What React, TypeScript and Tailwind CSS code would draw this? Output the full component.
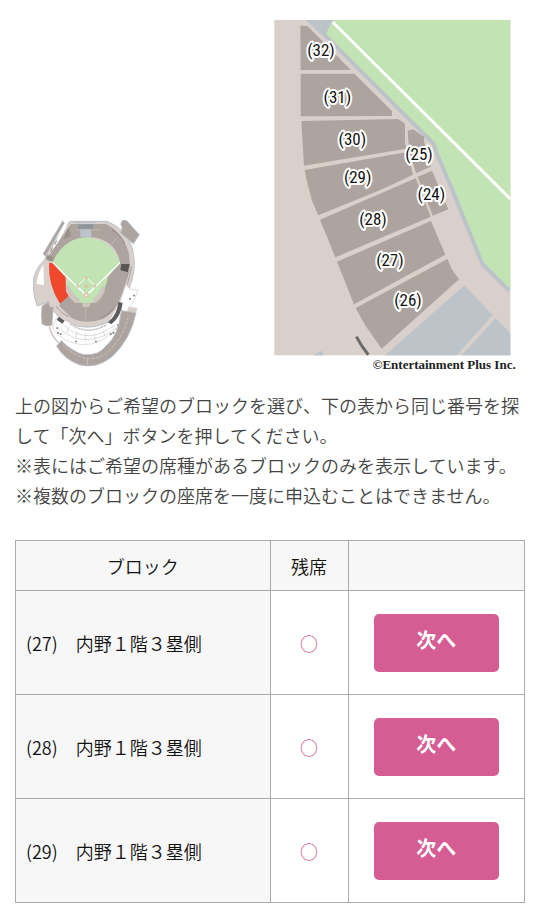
import { MouseEvent, useState } from 'react'

const BLOCKS = [
  { id: 32, points: '106,47 128,49 258,180 107,180', x: 168, y: 121 },
  { id: 31, points: '107,191 268,191 381,303 381,318 107,319', x: 217, y: 261 },
  { id: 30, points: '109,333 400,327 420,342 420,395 424,416 117,467', x: 262, y: 388 },
  { id: 29, points: '119,480 427,426 444,494 355,536 160,616 140,570 125,510', x: 278, y: 502 },
  { id: 28, points: '165,629 452,505 460,525 497,620 211,742', x: 324, y: 629 },
  { id: 27, points: '216,755 498,633 541,734 267,883', x: 375, y: 751 },
  { id: 26, points: '272,894 547,747 560,777 582,808 350,1016 300,945', x: 429, y: 871 },
  { id: 25, points: '428,362 445,358 477,380 478,398 497,470 453,490 432,420', x: 462, y: 433 },
  { id: 24, points: '458,500 501,482 550,598 503,617', x: 499, y: 552 },
]

const SEATS = [
  { id: 27, name: '内野１階３塁側', status: '○' },
  { id: 28, name: '内野１階３塁側', status: '○' },
  { id: 29, name: '内野１階３塁側', status: '○' },
]

function StadiumMap() {
  return (
    <svg className="h-[152px] w-[110px] shrink-0" viewBox="30 30 330 456" role="img" aria-label="球場全体図">
      {/* outer walkway */}
      <path
        d="M150 34 L262 34 Q318 58 336 112 Q350 160 336 210 L318 262 Q300 318 256 340 Q205 362 150 342 Q104 322 86 275 L52 288 Q36 250 42 200 Q54 165 72 152 L92 108 Z"
        fill="#d9d0cb"
        stroke="#b9c2c8"
        strokeWidth="3"
      />
      <path d="M70 165 L72 225 L50 222 Q52 190 70 165 Z" fill="#fff" />
      <path d="M142 40 L150 62 L104 132 L80 130 Z" fill="#d9d0cb" />
      <path d="M138 42 L98 122" stroke="#fff" strokeWidth="9" />
      <path d="M128 32 L133 40 L76 139 L69 132 Z" fill="#aea49f" stroke="#b9c2c8" strokeWidth="2" />
      <path d="M110 92 L104 104 M98 112 L92 124" stroke="#8f8884" strokeWidth="3" />

      {/* seating bowl */}
      <path
        d="M153 42 L258 42 Q308 66 326 128 Q334 170 324 200 L304 256 Q288 308 250 326 Q200 346 155 324 L118 288 L122 277 L145 258 L165 278 L240 278 L278 178 L300 156 Q290 104 240 86 Q190 74 148 96 L100 156 L80 150 L96 122 Z"
        fill="#aea49f"
      />
      <path d="M260 204 L300 158 L312 188 L290 262 L222 290 Z" fill="#aea49f" />
      <path d="M146 50 L152 78 L130 88 Z M82 134 L100 142 L94 154 L78 148 Z" fill="#998f8a" />
      <path d="M181 58 L214 58 L214 82 L181 82 Z" fill="#bcc4ca" />
      <path d="M173 44 L220 42 L220 57 L175 57 Z" fill="#8e979d" />
      <path d="M160 36 L228 36" stroke="#b9c2c8" strokeWidth="6" />
      <path d="M168 60 H238 M196 292 V332 M292 82 L272 106" stroke="#c8beb9" strokeWidth="2" fill="none" />
      <path d="M276 60 Q306 78 314 102 M334 170 Q330 200 322 222" stroke="#706b68" strokeWidth="2" strokeDasharray="5 2" fill="none" />
      <path d="M108 288 Q124 310 146 320 M244 322 Q268 312 280 296" stroke="#706b68" strokeWidth="2" strokeDasharray="5 2" fill="none" />
      <path d="M304 162 L329 162 L323 187 L301 180 Z" fill="#575654" />

      {/* field */}
      <path d="M98 158 Q122 100 172 86 Q222 74 260 102 Q288 126 300 158 L264 200 Q256 244 232 268 Q200 292 168 270 Q144 246 138 204 Z" fill="#c2e4b4" />
      <path d="M138 230 L146 226 Q156 256 180 270 L172 279 Q146 260 138 230 Z M247 230 L256 237 Q248 264 228 278 L219 268 Q238 254 247 230 Z M186 280 L212 280 L208 291 L188 291 Z" fill="#d0c6c1" stroke="#c0b6b1" strokeWidth="1" />
      <path d="M98 158 L199 257 L300 158" stroke="#fff" strokeWidth="4" fill="none" />
      <path d="M199 202 L226 228 L199 255 L172 228 Z" stroke="#fff" strokeWidth="3" fill="none" />
      <circle cx="199" cy="229" r="6" fill="#dfc7a9" />
      <circle cx="199" cy="255" r="8" fill="#dfc7a9" />
      <circle cx="199" cy="256" r="3" fill="#fff" />
      <circle cx="199" cy="203" r="5" fill="#dfc7a9" />
      <circle cx="174" cy="228" r="5" fill="#dfc7a9" />
      <circle cx="224" cy="228" r="5" fill="#dfc7a9" />

      {/* selected area */}
      <path d="M87 158 L98 160 L137 202 L138 244 L146 258 L120 281 Q84 226 87 158 Z" fill="#f0482d" />

      {/* outer stands */}
      <path d="M308 30 L319 31 L358 74 L340 101 L302 69 Q310 50 302 43 Z" fill="#aea49f" stroke="#b9c2c8" strokeWidth="3" />
      <path d="M66 287 L87 276 L100 290 L96 346 Q80 352 66 342 Q62 312 66 287 Z" fill="#aea49f" stroke="#b9c2c8" strokeWidth="2" />
      <path d="M86 278 L98 274 L100 292 L90 290 Z" fill="#d9d0cb" />

      {/* concourse */}
      <path d="M100 345 L112 318 L142 334 Q200 382 262 342 L300 276 L318 224 L330 238 L354 240 L340 276 L328 290 L304 340 Q250 408 184 404 Q128 396 100 360 Z" fill="#fff" stroke="#cfcfcf" strokeWidth="2" />
      <path d="M130 344 Q200 410 286 344 M118 356 Q200 426 298 348 M148 350 L140 368 M172 364 L166 384 M196 370 V394 M222 370 L226 390 M248 362 L256 380" stroke="#cbcbcb" strokeWidth="2" fill="none" />
      <path d="M150 342 Q200 378 258 346" stroke="#aaa" strokeWidth="3" strokeDasharray="6 3" fill="none" />
      <path d="M117 320 L134 332 L127 341 L110 329 Z M295 276 L308 278 Q304 318 274 343 L264 337 Q292 314 295 276 Z" fill="#5d5d5d" />
      <path d="M112 352 v5 M114 366 v5 M122 370 v5 M168 392 v5 M228 392 v5 M272 370 v5 M280 366 v5 M294 342 v5 M330 264 v5 M342 254 v5" stroke="#777" strokeWidth="5" />
      <path d="M88 350 Q96 382 116 398" stroke="#d0c8c4" strokeWidth="5" fill="none" />
      <path d="M326 290 L352 294 L348 310 L322 306 Z" fill="#d9d0cb" />
      <path
        d="M304 302 L348 308 Q332 388 276 440 Q228 478 178 464 Q132 448 110 408 L124 392 Q156 424 190 434 Q236 438 258 408 Q296 376 304 302 Z"
        fill="#aea49f"
        stroke="#b9c2c8"
        strokeWidth="3"
      />
      <path d="M128 404 Q196 470 258 432 Q310 386 326 316" stroke="#d9d0cb" strokeWidth="2" strokeDasharray="10 4" fill="none" />
      <path d="M203 444 V466" stroke="#d9d0cb" strokeWidth="2" />
    </svg>
  )
}

function BlockMap() {
  return (
    <svg className="h-[352px] w-[243px] shrink-0" viewBox="27 30 729 1056" role="img" aria-label="ブロック拡大図">
      <rect x="28" y="30" width="708" height="1006" fill="#d9d0cb" />
      <path d="M203 30 H736 V840 L655 760 L512 405 L180 75 Z" fill="#c2e4b4" />
      <path d="M122 30 H205 L182 72 L166 72 Z" fill="#bcc4ca" />
      <path d="M172 68 L505 400 L520 442 L562 540 L652 762 L732 842" stroke="#bcc4ca" strokeWidth="12" fill="none" />
      <path d="M203 36 L736 567" stroke="#fff" strokeWidth="9" />
      <path d="M598 826 L683 915 L575 1036 H360 Z M692 925 L736 970 V1036 H590 Z M144 1036 L170 1022 L177 1036 Z" fill="#bcc4ca" />
      <path d="M274 980 Q290 1010 310 1034" stroke="#666b69" strokeWidth="9" fill="none" />
      {BLOCKS.map((block) => (
        <polygon key={block.id} points={block.points} fill="#aea49f" />
      ))}
      {BLOCKS.map((block) => (
        <text
          key={block.id}
          x={block.x}
          y={block.y + 17}
          textAnchor="middle"
          className="fill-[#111] stroke-white stroke-[12px] font-['Roboto_Condensed','Roboto',sans-serif] text-[51px] [paint-order:stroke] [stroke-linejoin:round]"
        >
          ({block.id})
        </text>
      ))}
      <text x="752" y="1076" textAnchor="end" className="fill-[#222] font-['Liberation_Serif',serif] text-[39px] font-bold">
        ©Entertainment Plus Inc.
      </text>
    </svg>
  )
}

export default function App() {
  const [selected, setSelected] = useState<number | null>(null)

  const handleNext = (e: MouseEvent<HTMLButtonElement>, id: number) => {
    e.preventDefault()
    setSelected(id)
  }

  return (
    <main lang="ja" className="bg-white px-[15px] pt-5 pb-3 font-['Noto_Sans_CJK_JP',sans-serif] text-lg text-[#444]">
      <div className="flex items-end justify-between pr-2 pl-[15px]">
        <StadiumMap />
        <BlockMap />
      </div>

      <p className="mt-[18px] leading-[30px] font-[350]">
        上の図からご希望のブロックを選び、下の表から同じ番号を探して「次へ」ボタンを押してください。
        <br />
        ※表にはご希望の席種があるブロックのみを表示しています。
        <br />
        ※複数のブロックの座席を一度に申込むことはできません。
      </p>

      <table className="mt-[30px] w-full table-fixed border-collapse font-[350] text-[#111]">
        <colgroup>
          <col className="w-1/2" />
          <col className="w-[78px]" />
          <col />
        </colgroup>
        <thead>
          <tr className="h-[50px] bg-[#f7f7f7]">
            <th scope="col" className="border border-[#aaa] font-[350]">ブロック</th>
            <th scope="col" className="border border-[#aaa] font-[350]">残席</th>
            <td className="border border-[#aaa]" />
          </tr>
        </thead>
        <tbody>
          {SEATS.map((seat) => (
            <tr key={seat.id} className="h-[104px]">
              <th scope="row" className="border border-[#aaa] bg-[#f7f7f7] px-2.5 text-left font-[350]">
                ({seat.id})　{seat.name}
              </th>
              <td className="border border-[#aaa] text-center font-medium text-[#d65c94]">{seat.status}</td>
              <td className="border border-[#aaa] text-center">
                <button
                  type="button"
                  aria-pressed={selected === seat.id}
                  onClick={(e) => handleNext(e, seat.id)}
                  className="h-[58px] w-[125px] rounded-[5px] bg-[#d65c94] pb-1.5 align-middle text-xl font-bold text-white"
                >
                  次へ
                </button>
              </td>
            </tr>
          ))}
        </tbody>
      </table>
    </main>
  )
}
